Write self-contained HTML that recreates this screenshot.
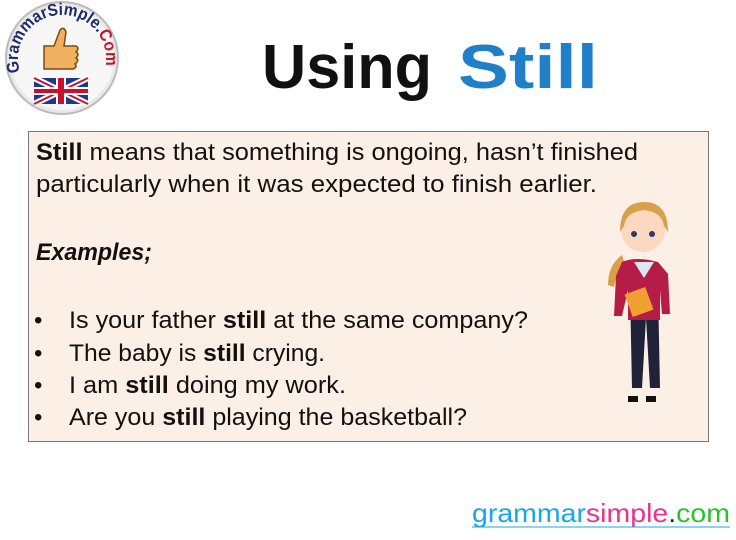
<!DOCTYPE html>
<html><head><meta charset="utf-8"><style>
body{margin:0;width:736px;height:535px;background:#fff;overflow:hidden}
</style></head><body>
<svg width="736" height="535" xmlns="http://www.w3.org/2000/svg" font-family="Liberation Sans, sans-serif">
<defs><path id="arc" d="M20,72 A44,44 0 1,1 104,72"/></defs>
<circle cx="62" cy="58" r="56" fill="#e8e8e8" stroke="#bbb" stroke-width="2"/>
<circle cx="62" cy="58" r="52" fill="#f7f7f7"/>
<text font-size="17" font-weight="bold" fill="#1d2b6b"><textPath href="#arc" textLength="158" lengthAdjust="spacingAndGlyphs">GrammarSimple.<tspan fill="#c0182a">Com</tspan></textPath></text>
<path d="M44,46 h10 l6,-16 q4,-4 6,2 l-2,14 h12 q4,2 0,6 q4,2 0,6 q4,2 -1,6 q3,3 -2,5 h-29z" fill="#f0b060" stroke="#7a4a10" stroke-width="1.5"/>
<rect x="34" y="78" width="54" height="26" fill="#1d3a8a"/>
<path d="M34,78 L88,104 M88,78 L34,104" stroke="#fff" stroke-width="6"/>
<path d="M34,78 L88,104 M88,78 L34,104" stroke="#c8102e" stroke-width="2"/>
<rect x="56" y="78" width="10" height="26" fill="#fff"/><rect x="34" y="87" width="54" height="8" fill="#fff"/>
<rect x="58" y="78" width="6" height="26" fill="#c8102e"/><rect x="34" y="89" width="54" height="4" fill="#c8102e"/>
<text x="262" y="88" font-size="62" font-weight="bold" fill="#111" textLength="170" lengthAdjust="spacingAndGlyphs">Using</text>
<text x="458" y="88" font-size="62" font-weight="bold" fill="#1f7fc8" textLength="140" lengthAdjust="spacingAndGlyphs">Still</text>
<rect x="28.5" y="131.5" width="680" height="310" fill="#fcefe6" stroke="#777" stroke-width="1"/>
<g font-size="24" fill="#111">
<text x="36" y="160" textLength="602" lengthAdjust="spacingAndGlyphs"><tspan font-weight="bold">Still</tspan> means that something is ongoing, hasn’t finished</text>
<text x="36" y="192" textLength="561" lengthAdjust="spacingAndGlyphs">particularly when it was expected to finish earlier.</text>
<text x="36" y="260" textLength="116" lengthAdjust="spacingAndGlyphs" font-weight="bold" font-style="italic">Examples;</text>
<text x="34" y="328">•</text><text x="34" y="361">•</text><text x="34" y="393">•</text><text x="34" y="425">•</text>
<text x="69" y="328" textLength="459" lengthAdjust="spacingAndGlyphs">Is your father <tspan font-weight="bold">still</tspan> at the same company?</text>
<text x="69" y="361" textLength="256" lengthAdjust="spacingAndGlyphs">The baby is <tspan font-weight="bold">still</tspan> crying.</text>
<text x="69" y="393" textLength="277" lengthAdjust="spacingAndGlyphs">I am <tspan font-weight="bold">still</tspan> doing my work.</text>
<text x="69" y="425" textLength="398" lengthAdjust="spacingAndGlyphs">Are you <tspan font-weight="bold">still</tspan> playing the basketball?</text>
</g>
<path d="M622,255 q-14,10 -14,30 l6,2 q4,-18 10,-26z" fill="#d9a04a"/>
<path d="M630,290 h28 l2,98 h-10 l-4,-70 l-4,70 h-10z" fill="#1f2238"/>
<path d="M622,262 q14,-6 36,0 l10,12 l2,40 h-8 l-2,-24 v30 h-32 v-30 l-6,26 h-8 l2,-40z" fill="#b51d46"/>
<path d="M634,262 l10,16 l10,-16z" fill="#dbe8f2"/>
<rect x="628" y="290" width="22" height="24" fill="#f0a030" transform="rotate(-20 639 302)"/>
<circle cx="643" cy="230" r="22" fill="#fbd8c0"/>
<path d="M620,232 q0,-30 24,-30 q24,0 24,30 l-4,-6 q-2,-14 -20,-16 q-18,2 -20,16z" fill="#d9a04a"/>
<circle cx="634" cy="234" r="3" fill="#2a3a6a"/><circle cx="652" cy="234" r="3" fill="#2a3a6a"/>
<path d="M628,396 h10 v6 h-10z M646,396 h10 v6 h-10z" fill="#111"/>
<text x="472" y="522" font-size="26" textLength="258" lengthAdjust="spacingAndGlyphs"><tspan fill="#1aa6e8">grammar</tspan><tspan fill="#e8358a">simple</tspan><tspan fill="#222">.</tspan><tspan fill="#2cc12c">com</tspan></text>
<line x1="472" y1="527" x2="730" y2="527" stroke="#1aa6e8" stroke-width="1"/>
</svg>
</body></html>
